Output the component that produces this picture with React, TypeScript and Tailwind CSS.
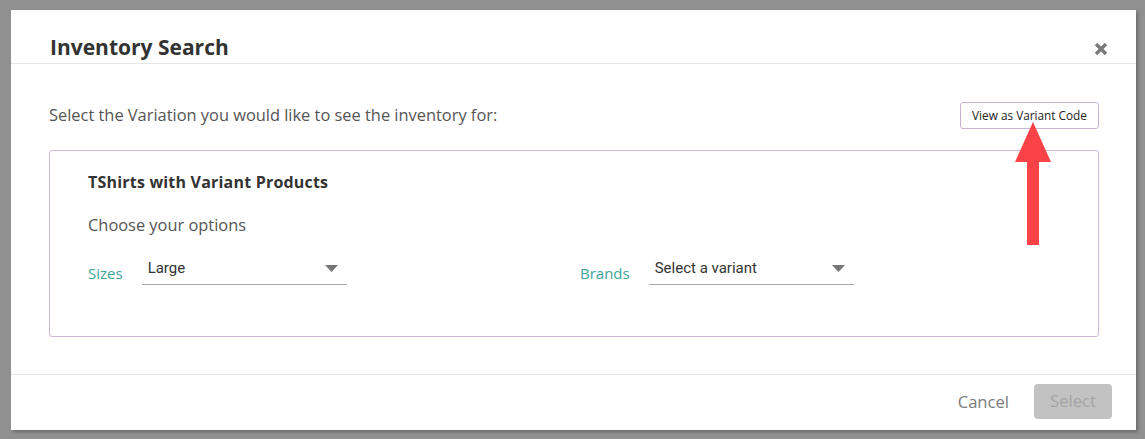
import React from 'react'

function ChevronSelect({ value }: { value: string }) {
  return (
    <div className="relative flex h-[30px] w-[205px] items-center border-b border-[#a8a8a8] pl-[6px]">
      <span className="font-['Roboto'] text-[15px] leading-none text-[#333] -mt-[2px]">{value}</span>
      <svg
        className="absolute right-[9px] top-[10px]"
        width="13"
        height="7"
        viewBox="0 0 13 7"
      >
        <path d="M0 0 H13 L6.5 7 Z" fill="#757575" />
      </svg>
    </div>
  )
}

function Option({ label, value }: { label: string; value: string }) {
  return (
    <div className="flex items-center gap-[19px]">
      <span className="pt-[6px] text-[15px] text-[#3da597]">{label}</span>
      <ChevronSelect value={value} />
    </div>
  )
}

export default function App() {
  return (
    <div className="h-[439px] w-[1145px] overflow-hidden bg-[#909090] pl-[11px] pt-[10px] font-['Open_Sans',sans-serif]">
      <div className="flex h-[420px] w-[1125px] flex-col bg-white shadow-[2px_2px_3px_rgba(0,0,0,0.25)]">
        {/* header */}
        <div className="relative h-[54px] border-b border-[#e6e6e6] px-[39px] pt-[23px]">
          <h1 className="text-[21px] font-bold leading-[28px] text-[#333]">Inventory Search</h1>
          <svg
            className="absolute right-[28px] top-[32px]"
            width="14"
            height="14"
            viewBox="0 0 14 14"
          >
            <path d="M2 2 L12 12 M12 2 L2 12" stroke="#7a7a7a" strokeWidth="3.4" strokeLinecap="butt" />
          </svg>
        </div>

        {/* body */}
        <div className="relative flex-1 border-b border-[#e6e6e6] px-[38px] pt-[38px]">
          <div className="flex w-[1050px] items-center justify-between">
            <p className="text-[16.4px] text-[#555]">Select the Variation you would like to see the inventory for:</p>
            <button className="h-[27px] w-[139px] rounded-[3px] border border-[#c6b3d3] text-[11.8px] text-[#222]">
              View as Variant Code
            </button>
          </div>

          <div className="mt-[21px] h-[187px] w-[1050px] rounded-[3px] border border-[#cbb8d6] pl-[38px] pt-[21px]">
            <h2 className="text-[16px] font-bold leading-[20px] tracking-[0.2px] text-[#333]">TShirts with Variant Products</h2>
            <p className="mt-[22px] text-[16.4px] leading-[22px] text-[#555]">Choose your options</p>
            <div className="mt-[19px] grid grid-cols-[492px_1fr]">
              <Option label="Sizes" value="Large" />
              <Option label="Brands" value="Select a variant" />
            </div>
          </div>

          {/* annotation arrow */}
          <svg
            className="absolute left-[1003px] top-[58px]"
            width="38"
            height="124"
            viewBox="0 0 38 124"
          >
            <path d="M19 0 L37 40 L25 40 L25 123 L13 123 L13 40 L1 40 Z" fill="#fb4246" />
          </svg>
        </div>

        {/* footer */}
        <div className="flex h-[55px] items-start justify-end gap-[25px] pr-[24px] pt-[9px]">
          <span className="mt-[6px] text-[16.6px] text-[#7a7a7a]">Cancel</span>
          <button className="h-[35px] w-[78px] rounded-[4px] bg-[#c2c2c2] text-[16.6px] text-[#a3a3a3]">Select</button>
        </div>
      </div>
    </div>
  )
}
